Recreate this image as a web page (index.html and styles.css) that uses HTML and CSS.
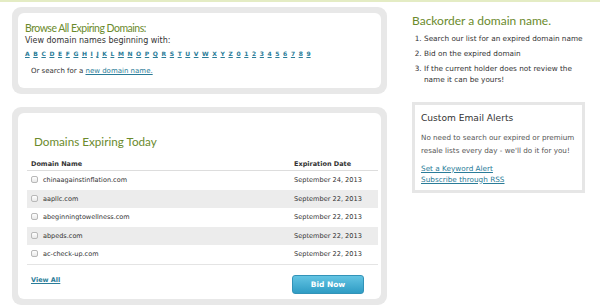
FILE: index.html
```html
<!DOCTYPE html>
<html lang="en">
<head>
    <meta charset="UTF-8">
    <title>Expiring Domains</title>
    <link rel="stylesheet" href="styles.css">
</head>
<body>

    <div class="page">
        <div class="main">
            <div class="panel">
                <div class="panel-inner browse">
                    <h2>Browse All Expiring Domains:</h2>
                    <p class="lead">View domain names beginning with:</p>
                    <div class="letters">
                        <a href="#">A</a><a href="#">B</a><a href="#">C</a><a href="#">D</a><a href="#">E</a><a href="#">F</a><a href="#">G</a><a href="#">H</a><a href="#">I</a><a href="#">J</a><a href="#">K</a><a href="#">L</a><a href="#">M</a><a href="#">N</a><a href="#">O</a><a href="#">P</a><a href="#">Q</a><a href="#">R</a><a href="#">S</a><a href="#">T</a><a href="#">U</a><a href="#">V</a><a href="#">W</a><a href="#">X</a><a href="#">Y</a><a href="#">Z</a><a href="#">0</a><a href="#">1</a><a href="#">2</a><a href="#">3</a><a href="#">4</a><a href="#">5</a><a href="#">6</a><a href="#">7</a><a href="#">8</a><a href="#">9</a>
                    </div>
                    <p class="search">Or search for a <a href="#">new domain name.</a></p>
                </div>
            </div>

            <div class="panel">
                <div class="panel-inner expiring">
                    <h2>Domains Expiring Today</h2>
                    <table class="domains">
                        <thead>
                            <tr><th>Domain Name</th><th class="date">Expiration Date</th></tr>
                        </thead>
                        <tbody>
                            <tr><td><span class="check"></span>chinaagainstinflation.com</td><td class="date">September 24, 2013</td></tr>
                            <tr class="alt"><td><span class="check"></span>aapllc.com</td><td class="date">September 22, 2013</td></tr>
                            <tr><td><span class="check"></span>abeginningtowellness.com</td><td class="date">September 22, 2013</td></tr>
                            <tr class="alt"><td><span class="check"></span>abpeds.com</td><td class="date">September 22, 2013</td></tr>
                            <tr><td><span class="check"></span>ac-check-up.com</td><td class="date">September 22, 2013</td></tr>
                        </tbody>
                    </table>
                    <div class="actions">
                        <a href="#" class="view-all">View All</a>
                        <button type="button" class="bid">Bid Now</button>
                    </div>
                </div>
            </div>
        </div>

        <div class="side">
            <h3>Backorder a domain name.</h3>
            <ol class="steps">
                <li>Search our list for an expired domain name</li>
                <li>Bid on the expired domain</li>
                <li>If the current holder does not review the name it can be yours!</li>
            </ol>

            <div class="alerts">
                <h4>Custom Email Alerts</h4>
                <p>No need to search our expired or premium resale lists every day - we'll do it for you!</p>
                <a href="#">Set a Keyword Alert</a>
                <a href="#">Subscribe through RSS</a>
            </div>
        </div>
    </div>

</body>
</html>
```

FILE: styles.css
```css
body {
    margin: 0;
    font-family: "DejaVu Sans", sans-serif;
    color: #333;
    background-color: #fff;
}
a {
    color: #2a7c98;
}
.page {
    display: flex;
    border-top: 2px solid #e4ecc4;
    padding: 5px 0 0 12px;
}
.main {
    width: 375px;
    display: flex;
    flex-direction: column;
    gap: 13px;
}
.panel {
    background-color: #e8e8e8;
    border-radius: 9px;
    padding: 6px;
}
.panel-inner {
    background-color: white;
    border-radius: 6px;
}
h2, h3 {
    margin: 0;
    font-family: Lato, sans-serif;
    font-weight: normal;
    color: #6b8a2c;
}

/* browse box */
.browse {
    height: 75px;
    box-sizing: border-box;
    padding: 8px 0 0 7px;
}
.browse h2 {
    font-size: 10.5px;
    line-height: 14px;
    letter-spacing: -0.5px;
}
.lead {
    margin: 0;
    font-size: 8px;
    line-height: 12px;
}
.letters {
    display: flex;
    justify-content: space-between;
    width: 286px;
    margin-top: 2px;
    font-size: 6px;
    line-height: 10px;
    font-weight: bold;
}
.search {
    margin: 6px 0 0 6px;
    font-size: 7px;
    line-height: 12px;
}

/* expiring table */
.expiring {
    height: 186px;
    box-sizing: border-box;
    padding: 20px 3px 0 9px;
}
.expiring h2 {
    font-size: 11.7px;
    line-height: 16px;
    margin-left: 7px;
}
.domains {
    width: 351px;
    margin-top: 8px;
    border-collapse: collapse;
    font-size: 6.5px;
}
.domains th {
    text-align: left;
    font-weight: bold;
    height: 13px;
    padding: 0 0 0 4px;
    vertical-align: middle;
    border-bottom: 1px solid #ddd;
}
.domains td {
    height: 18.5px;
    padding: 0 0 0 4px;
}
.domains tbody tr:last-child td {
    border-bottom: 1px solid #e4e4e4;
}
.domains .date {
    width: 84px;
}
.domains td.date {
    font-size: 6.6px;
}
.domains .alt {
    background-color: #ececec;
}
.check {
    display: inline-block;
    width: 5px;
    height: 5px;
    margin-right: 5px;
    vertical-align: -1px;
    border: 1px solid #b8b8b8;
    border-radius: 2px;
    background: linear-gradient(#fff, #e8e8e8);
}
.actions {
    display: flex;
    justify-content: space-between;
    align-items: center;
    width: 333px;
    margin: 10px 0 0 4px;
}
.view-all {
    font-size: 6.5px;
    font-weight: bold;
    margin-top: -8px;
}
.bid {
    width: 72px;
    height: 19px;
    padding: 0;
    border: 1px solid #3293b8;
    border-radius: 3px;
    background: linear-gradient(#63c4e3, #2f9cc4);
    color: white;
    font-family: "DejaVu Sans", sans-serif;
    font-size: 7.5px;
    font-weight: bold;
}

/* right column */
.side {
    width: 173px;
    margin-left: 25px;
}
h3 {
    margin-top: 6px;
    font-size: 12px;
    line-height: 16px;
}
.steps {
    margin: 4px 0 0;
    padding: 0 0 0 12px;
    font-size: 7.3px;
    line-height: 11px;
}
.steps li {
    margin-bottom: 4px;
}
.steps li:last-child {
    margin-bottom: 0;
}
.alerts {
    margin-top: 17px;
    height: 91px;
    box-sizing: border-box;
    padding: 6px 6px 0;
    border: 3px solid #e6e6e6;
}
h4 {
    margin: 0;
    font-size: 9.1px;
    line-height: 14px;
    font-weight: normal;
}
.alerts p {
    margin: 5.5px 0 6px;
    font-size: 7.2px;
    line-height: 13px;
    color: #555;
}
.alerts a {
    display: block;
    font-size: 7.3px;
    line-height: 11px;
}
```
